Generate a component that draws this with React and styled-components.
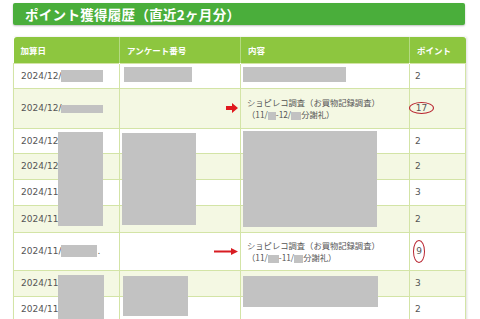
import React from "react";
import styled, { createGlobalStyle } from "styled-components";

const GlobalStyle = createGlobalStyle`
 html, body {
  margin: 0;
  padding: 0;
  background: #ffffff;
 }
 body {
  font-family: "DejaVu Sans", "Noto Sans CJK JP", sans-serif;
  color: #555555;
 }
`;

const rows = [
 { date: "2024/12/", mask: 42, h: 25, pts: "2" },
 { date: "2024/12/", mask: 42, maskH: 8, h: 40, pts: "17", mark: "wide", arrow: "fat", period: ["11/", 8, "-12/", 10] },
 { date: "2024/12/", h: 25, pts: "2" },
 { date: "2024/12/", h: 26, pts: "2" },
 { date: "2024/11/", h: 26, pts: "3" },
 { date: "2024/11/", h: 27, pts: "2" },
 { date: "2024/11/", mask: 36, dot: true, h: 38, pts: "9", mark: "tall", arrow: "thin", period: ["11/", 11, "-11/", 9] },
 { date: "2024/11/", h: 26, pts: "3" },
 { date: "2024/11/", h: 26, pts: "2" },
];

// redaction blocks that span several rows, placed over the table
const masks = [
 { x: 111, y: 30, w: 68, h: 15 },
 { x: 230, y: 30, w: 103, h: 15 },
 { x: 45, y: 95, w: 45, h: 94 },
 { x: 109, y: 96, w: 74, h: 92 },
 { x: 230, y: 94, w: 134, h: 96 },
 { x: 45, y: 238, w: 46, h: 50 },
 { x: 110, y: 239, w: 65, h: 40 },
 { x: 230, y: 239, w: 135, h: 31 },
];

const FatArrow = () => (
 <svg width="12" height="10" viewBox="0 0 12 10">
  <path d="M0 3 H6 V0 L12 5 L6 10 V7 H0 Z" fill="#e0181e" />
 </svg>
);

const ThinArrow = () => (
 <svg width="24" height="7" viewBox="0 0 24 7">
  <path d="M0 2.6 H17 V0 L24 3.5 L17 7 V4.4 H0 Z" fill="#d81c22" />
 </svg>
);

const App = () => {
 return (
  <Page>
   <GlobalStyle />
   <TitleBar>ポイント獲得履歴（直近2ヶ月分）</TitleBar>
   <TableWrap>
    <Table>
     <colgroup>
      <col style={{ width: 106 }} />
      <col style={{ width: 121 }} />
      <col style={{ width: 169 }} />
      <col style={{ width: 56 }} />
     </colgroup>
     <thead>
      <tr>
       <HeadCell>加算日</HeadCell>
       <HeadCell>アンケート番号</HeadCell>
       <HeadCell>内容</HeadCell>
       <HeadCell>ポイント</HeadCell>
      </tr>
     </thead>
     <tbody>
      {rows.map((r, i) => (
       <Row key={i} $alt={i % 2 === 1} $h={r.h}>
        <DateCell>
         {r.date}
         {r.mask && <InlineMask $w={r.mask} $h={r.maskH || 12} />}
         {r.dot && "."}
        </DateCell>
        <ArrowCell>
         {r.arrow === "fat" && <FatArrow />}
         {r.arrow === "thin" && <ThinArrow />}
        </ArrowCell>
        <ContentCell>
         {r.period && (
          <>
           <Line>ショピレコ調査（お買物記録調査）</Line>
           <Line>
            （{r.period[0]}
            <InlineMask $w={r.period[1]} $h={8} />
            {r.period[2]}
            <InlineMask $w={r.period[3]} $h={8} />
            分謝礼）
           </Line>
          </>
         )}
        </ContentCell>
        <PointCell>
         {r.mark ? <Circled $kind={r.mark}>{r.pts}</Circled> : r.pts}
        </PointCell>
       </Row>
      ))}
     </tbody>
    </Table>
    {masks.map((m, i) => (
     <Mask key={i} style={{ left: m.x, top: m.y, width: m.w, height: m.h }} />
    ))}
   </TableWrap>
  </Page>
 );
};

export default App;

const Page = styled.div`
 width: 480px;
 height: 319px;
 overflow: hidden;
 padding: 3px 15px 0 13px;
 box-sizing: border-box;
`;

const TitleBar = styled.div`
 height: 22px;
 display: flex;
 align-items: center;
 padding: 0 12px;
 border-radius: 2px;
 background-color: #4aae3b;
 box-shadow: 0 1px 2px rgba(0, 0, 0, 0.25);
 color: #ffffff;
 font-family: "Noto Sans CJK JP", sans-serif;
 font-size: 13.5px;
 font-weight: 700;
 letter-spacing: 0.3px;
 box-sizing: border-box;
`;

const TableWrap = styled.div`
 position: relative;
 margin-top: 12px;
 width: 452px;
`;

const Table = styled.table`
 width: 452px;
 table-layout: fixed;
 border-collapse: collapse;
 box-shadow: 1px 0 2px rgba(0, 0, 0, 0.12);
`;

const HeadCell = styled.th`
 height: 26px;
 padding: 0 7px;
 text-align: left;
 background-color: #8dc63f;
 color: #ffffff;
 font-family: "Noto Sans CJK JP", sans-serif;
 font-size: 8.5px;
 font-weight: 700;
 border-left: 1px solid rgba(255, 255, 255, 0.35);
 box-sizing: border-box;
 &:first-child {
  border-left: none;
  border-top-left-radius: 3px;
 }
 &:last-child {
  border-top-right-radius: 3px;
 }
`;

const Row = styled.tr`
 height: ${(p) => p.$h}px;
 background-color: ${(p) => (p.$alt ? "#f4f8e3" : "#ffffff")};
 & > td {
  border: 1px solid #d3e4a6;
 }
`;

const DateCell = styled.td`
 padding: 0 0 0 7px;
 font-size: 9px;
 white-space: nowrap;
 vertical-align: middle;
`;

const ArrowCell = styled.td`
 padding: 0 2px 0 0;
 text-align: right;
 vertical-align: middle;
 line-height: 0;
 & > svg {
  display: inline-block;
 }
`;

const ContentCell = styled.td`
 padding: 0 0 0 6px;
 font-family: "Noto Sans CJK JP", sans-serif;
 font-size: 8.3px;
 vertical-align: middle;
`;

const Line = styled.div`
 line-height: 12px;
 white-space: nowrap;
`;

const PointCell = styled.td`
 padding: 0 0 0 5px;
 font-size: 9px;
 vertical-align: middle;
`;

const Circled = styled.span`
 display: inline-flex;
 align-items: center;
 justify-content: center;
 width: ${(p) => (p.$kind === "wide" ? 25 : 12)}px;
 height: ${(p) => (p.$kind === "wide" ? 12 : 23)}px;
 margin-left: ${(p) => (p.$kind === "wide" ? -6 : -2)}px;
 border: 1.3px solid #b8232f;
 border-radius: 50%;
 box-sizing: border-box;
`;

const InlineMask = styled.span`
 display: inline-block;
 width: ${(p) => p.$w}px;
 height: ${(p) => p.$h}px;
 vertical-align: middle;
 background-color: #c2c2c2;
`;

const Mask = styled.div`
 position: absolute;
 background-color: #c2c2c2;
`;
